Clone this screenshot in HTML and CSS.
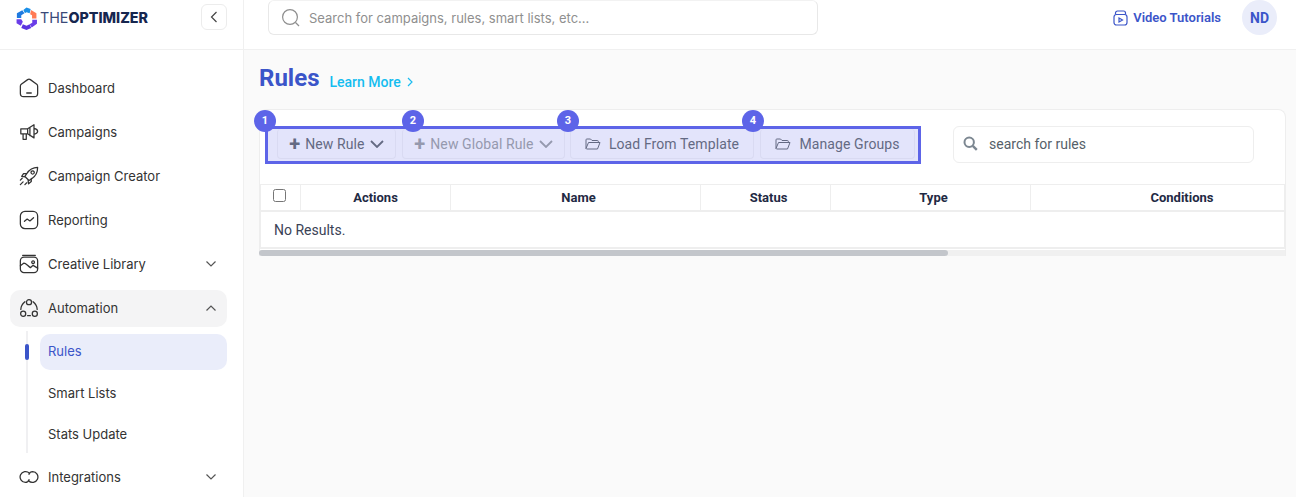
FILE: index.html
```html
<!DOCTYPE html>
<html lang="en">
<head>
<meta charset="utf-8">
<title>Rules</title>
<link rel="stylesheet" href="styles.css">
</head>
<body>
<div class="app">
  <aside class="sidebar">
    <div class="brand">
      <div class="logo">
        <svg width="21" height="23" viewBox="0 0 20 22">
          <path fill="#1f7ae0" d="M.8 6 6 3l2 3-3 2v2.500H.8z"/>
          <path fill="#1a8fe8" d="M7 2.800 10 .5l4 1.500-1 4-3-1-1.500 1z"/>
          <path fill="#ff7a55" d="M14.300 2.800 19.500 6v5h-4.200V8l-1.800-1z"/>
          <path fill="#6a3de8" d="M15.500 12.300H20V16l-5 3.500-2-3 2.500-1.500z"/>
          <path fill="#5b34e0" d="M6.500 16.500 10 18l3-1.500 1.500 3.500-4.500 2-5-2z"/>
          <path fill="#6a3de8" d="M.5 11.800H5L6.500 14l-2 4-4-2.500z"/>
        </svg>
        <span class="logo-text"><span class="logo-the">THE</span><span class="logo-opt">OPTIMIZER</span></span>
      </div>
      <button class="collapse" aria-label="Collapse">
        <svg width="8" height="12" viewBox="0 0 8 12"><path d="M6.500 1 1.500 6l5 5" fill="none" stroke="#444" stroke-width="1.200"/></svg>
      </button>
    </div>
    <nav class="nav">
      <a class="item">
        <svg class="ico" viewBox="0 0 22 22"><path d="M1.500 9c0-1 .3-1.700 1-2.200L9.500 1.800c1-.7 2-.7 3 0l7 5c.7.5 1 1.200 1 2.200v8a3.500 3.500 0 0 1-3.500 3.500H5a3.500 3.500 0 0 1-3.500-3.500z M8.500 16.500h5"/></svg>
        <span>Dashboard</span>
      </a>
      <a class="item">
        <svg class="ico" viewBox="0 0 22 22"><path d="M2 7.500h7.500L16.500 3v14.500L9.500 13H2z M4.500 13v6h3.500v-6 M16.500 7c2.500.5 4 2 4 3.200s-1.500 2.800-4 3.300 M9.500 7.500V13 M12 6v9"/></svg>
        <span>Campaigns</span>
      </a>
      <a class="item">
        <svg class="ico" viewBox="0 0 22 22"><path d="M20.500 1.500c-5 0-9 2-12 7l-2 3 4.500 4.500 3-2c5-3 6.500-7.500 6.500-12.500z M8.500 8.500H5L3 11.500l3.500.5 M13.500 13.500V17l-3 2.500-.5-3.500 M15 5.300a1.800 1.800 0 1 0 .01 0z M1.500 20.500l3-3 M1.500 15.500l2-2 M6.500 20.500l2-2"/></svg>
        <span>Campaign Creator</span>
      </a>
      <a class="item">
        <svg class="ico" viewBox="0 0 22 22"><rect x="1.500" y="1.500" width="19" height="19" rx="5"/><path d="M6 12.500 9 10l3 2 4-3.500"/></svg>
        <span>Reporting</span>
      </a>
      <a class="item">
        <svg class="ico" viewBox="0 0 22 22"><rect x="1.500" y="3.500" width="19" height="17" rx="4"/><path d="M4 1.500h14 M1.500 13l4-3c2 0 4 3 7 5l3-2.500 5 3 M15.500 7.500a1.500 1.500 0 1 0 .01 0z"/></svg>
        <span>Creative Library</span>
        <svg class="caret" viewBox="0 0 12 8"><path d="M1.500 1.500 6 6l4.500-4.500"/></svg>
      </a>
      <a class="item item-open">
        <svg class="ico" viewBox="0 0 22 22"><circle cx="11" cy="4.600" r="2.800"/><circle cx="4.600" cy="17.300" r="2.800"/><circle cx="17.400" cy="17.300" r="2.800"/><path d="M6.500 4C3.500 6.500 2 9.500 2 12.600 M15.500 4c3 2.500 4.500 5.500 4.500 8.600 M9.500 19.500h3"/></svg>
        <span>Automation</span>
        <svg class="caret" viewBox="0 0 12 8"><path d="M1.500 6.500 6 2l4.500 4.500"/></svg>
      </a>
      <div class="sub">
        <a class="sub-item sub-active">Rules</a>
        <a class="sub-item">Smart Lists</a>
        <a class="sub-item">Stats Update</a>
      </div>
      <a class="item item-last">
        <svg class="ico" viewBox="0 0 22 22"><path d="M11.500 6.800A6 6 0 1 0 7 17c2 0 3.500-1.500 4-3 M10.500 15.200A6 6 0 1 0 15 5c-2 0-3.500 1.500-4 3"/></svg>
        <span>Integrations</span>
        <svg class="caret" viewBox="0 0 12 8"><path d="M1.500 1.500 6 6l4.500-4.500"/></svg>
      </a>
    </nav>
  </aside>

  <div class="content">
    <header class="topbar">
      <label class="global-search">
        <svg width="20" height="20" viewBox="0 0 20 20"><circle cx="9" cy="9" r="7.400" fill="none" stroke="#8e8e8e" stroke-width="1.200"/><path d="m14.500 14.500 3.500 3.500" stroke="#8e8e8e" stroke-width="1.200"/></svg>
        <span>Search for campaigns, rules, smart lists, etc...</span>
      </label>
      <div class="top-right">
        <a class="tutorials">
          <svg width="15" height="16" viewBox="0 0 15 16" fill="none" stroke="#3b55c9" stroke-width="1.200"><rect x="1" y="4.500" width="13" height="10.500" rx="2.500"/><path d="M2.500 4.500V3a2 2 0 0 1 2-2h6a2 2 0 0 1 2 2v1.500"/><path d="M6 8v4l3.500-2z"/></svg>
          <span>Video Tutorials</span>
        </a>
        <div class="avatar">ND</div>
      </div>
    </header>

    <main class="main">
      <div class="heading">
        <h1>Rules</h1>
        <a class="learn">Learn More
          <svg width="6" height="10" viewBox="0 0 6 10"><path d="M1 1l4 4-4 4" fill="none" stroke="#1cbcf0" stroke-width="1.200"/></svg>
        </a>
      </div>

      <section class="card">
        <div class="toolbar">
          <div class="spot">
            <i class="badge b1">1</i><i class="badge b2">2</i><i class="badge b3">3</i><i class="badge b4">4</i>
            <button class="btn btn-rule"><b class="plus">+</b> New Rule
              <svg class="chev" viewBox="0 0 14 8"><path d="M1 1l6 6 6-6"/></svg>
            </button>
            <button class="btn btn-global btn-off"><b class="plus">+</b> New Global Rule
              <svg class="chev" viewBox="0 0 14 8"><path d="M1 1l6 6 6-6"/></svg>
            </button>
            <button class="btn btn-load">
              <svg class="folder" viewBox="0 0 16 12"><path d="M1 10.500V1.800C1 1.300 1.300 1 1.800 1h3.700l1.500 1.500h5.500c.5 0 .8.300.8.800V4.500 M1 10.500l2.500-6h11.500l-2.500 6.500H1.500z"/></svg>
              Load From Template
            </button>
            <button class="btn btn-groups">
              <svg class="folder" viewBox="0 0 16 12"><path d="M1 10.500V1.800C1 1.300 1.300 1 1.800 1h3.700l1.500 1.500h5.500c.5 0 .8.300.8.800V4.500 M1 10.500l2.500-6h11.500l-2.500 6.500H1.500z"/></svg>
              Manage Groups
            </button>
          </div>
          <label class="rule-search">
            <svg width="15" height="15" viewBox="0 0 15 15"><circle cx="6.200" cy="6.200" r="4.700" fill="none" stroke="#7c8791" stroke-width="2"/><path d="m9.800 9.800 4 4" stroke="#7c8791" stroke-width="2.400"/></svg>
            <span>search for rules</span>
          </label>
        </div>

        <div class="table-wrap">
          <div class="thead">
            <div class="th col-check"><span class="checkbox"></span></div>
            <div class="th col-actions">Actions</div>
            <div class="th col-name">Name</div>
            <div class="th col-status">Status</div>
            <div class="th col-type">Type</div>
            <div class="th col-cond">Conditions</div>
          </div>
          <div class="empty">No Results.</div>
        </div>
        <div class="scrollbar"><div class="thumb"></div></div>
      </section>
    </main>
  </div>
</div>
</body>
</html>
```
FILE: styles.css
```css
* { box-sizing: border-box; }
html, body { margin: 0; height: 100%; }
body { font-family: "Roboto", "Liberation Sans", sans-serif; background: #fafafa; overflow: hidden; }
a { text-decoration: none; }

.app { display: flex; height: 497px; overflow: hidden; }

.sidebar { width: 244px; flex: none; background: #fff; border-right: 1px solid #f0f0f0; }
.brand { height: 50px; display: flex; align-items: flex-start; justify-content: space-between; padding: 4px 16px 0 16px; border-bottom: 1px solid #f0f0f0; }
.logo { display: flex; align-items: center; gap: 3px; margin-top: 3px; }
.logo-text { font-family: "Inter", sans-serif; font-size: 14.300px; line-height: 16px; color: #16264f; margin-top: -1px; }
.logo-the { font-weight: 400; color: #3a4a78; }
.logo-opt { font-weight: 800; }
.collapse { width: 26px; height: 26px; padding: 0; border: 1px solid #ececec; border-radius: 6px; background: #fff; display: flex; align-items: center; justify-content: center; }

.nav { padding: 20px 16px 0 10px; }
.item { display: flex; align-items: center; height: 37px; margin-bottom: 7px; padding: 0 9px 2px; border-radius: 10px; font-family: "Inter", sans-serif; font-size: 13px; color: #333; }
.item > span { flex: 1; margin-left: 9px; }
.item-open { background: #f4f4f5; }
.ico { width: 20px; height: 20px; flex: none; fill: none; stroke: #333; stroke-width: 1.400; stroke-linecap: round; stroke-linejoin: round; }
.caret { width: 12px; height: 8px; flex: none; margin-right: 1px; fill: none; stroke: #555; stroke-width: 1.200; }

.sub { margin: -3px 0 0 16px; padding: 3px 0 0 12px; border-left: 2px solid #f0f0f2; }
.sub-item { display: flex; align-items: center; height: 36px; padding-left: 8px; margin-bottom: 5px; border-radius: 10px; font-family: "Inter", sans-serif; font-size: 13px; color: #333; }
.sub-active { padding-bottom: 2px; background: #eaedfa; color: #3b55c9; position: relative; }
.sub-item:last-child { margin-bottom: 0; height: 37px; padding-bottom: 2px; }
.sub-active::before { content: ""; position: absolute; left: -15px; top: 10px; width: 4px; height: 16px; border-radius: 2px; background: #3b55c9; }
.item-last { margin-top: 6px; }

.content { flex: 1; min-width: 0; display: flex; flex-direction: column; }
.topbar { height: 50px; flex: none; background: #fff; border-bottom: 1px solid #f0f0f0; display: flex; align-items: flex-start; justify-content: space-between; padding: 0 19px 0 24px; }
.global-search { width: 550px; height: 35px; border: 1px solid #e8e8e8; border-top-color: #f2f2f2; border-radius: 6px; display: flex; align-items: center; gap: 8px; padding: 0 12px; font-family: "Inter", sans-serif; font-size: 13px; color: #8f8f8f; }
.top-right { display: flex; align-items: center; gap: 21px; height: 35px; }
.tutorials { display: flex; align-items: center; gap: 5px; font-size: 13px; font-weight: 600; color: #3b55c9; }
.avatar { width: 35px; height: 35px; border-radius: 50%; background: #eaedfa; color: #3b55c9; font-size: 14px; font-weight: 700; display: flex; align-items: center; justify-content: center; }

.main { flex: 1; padding: 0 10px 0 15px; min-width: 0; }
.heading { display: flex; align-items: flex-start; gap: 10px; height: 59px; padding-top: 14px; }
h1 { margin: 0; font-size: 24px; font-weight: 700; color: #3b55c9; }
.learn { display: flex; align-items: center; gap: 6px; margin-top: 10px; font-size: 14px; font-weight: 500; color: #14bdf0; }

.card { background: #fff; border: 1px solid #eeeeee; border-bottom: 0; border-radius: 8px 8px 0 0; }
.toolbar { height: 74px; display: flex; align-items: flex-start; padding: 16px 0 0 5px; }
.spot { position: relative; display: flex; width: 656px; height: 38px; padding: 0 3px 0 9px; border: 3px solid #5d64e8; background: #e3e4fb; }
.badge { position: absolute; top: -19px; width: 22px; height: 22px; border-radius: 50%; background: #5d64e8; color: #fff; font: 700 11px/22px "Roboto", sans-serif; text-align: center; }
.b1 { left: -14px; }
.b2 { left: 134px; }
.b3 { left: 289px; }
.b4 { left: 474px; }
.btn { height: 30px; border: 1px solid #d9daf2; border-top: 0; border-radius: 4px; background: transparent; padding: 0; display: flex; align-items: center; justify-content: center; font-family: "Roboto", sans-serif; font-size: 14px; letter-spacing: .1px; color: #646a83; }
.btn-rule { width: 119px; gap: 5px; }
.btn-global { width: 163px; margin-left: 6px; gap: 5px; }
.btn-load { width: 184px; margin-left: 5px; gap: 8px; }
.btn-groups { width: 155px; margin-left: 6px; gap: 8px; }
.btn-off { color: #9599ae; }
.plus { font-size: 20px; font-weight: 700; line-height: 18px; letter-spacing: 0; }
.chev { width: 14px; height: 8px; fill: none; stroke: currentColor; stroke-width: 1.800; }
.folder { width: 16px; height: 12px; fill: none; stroke: currentColor; stroke-width: 1; }
.rule-search { width: 301px; height: 37px; margin-left: 32px; border: 1px solid #eeeeee; border-radius: 6px; display: flex; align-items: center; gap: 11px; padding: 0 9px 2px; font-size: 14px; color: #565f69; }

.table-wrap { overflow: hidden; border-right: 1px solid #eeeeee; border-left: 2px solid #eeeeee; border-bottom: 2px solid #eeeeee; margin-left: -1px; }
.thead { display: flex; width: 1074px; height: 28px; border-top: 1px solid #eeeeee; border-bottom: 2px solid #eeeeee; margin-left: -1px; }
.th { flex: none; display: flex; align-items: center; justify-content: center; border-right: 1px solid #eeeeee; font-size: 13px; font-weight: 700; color: #1f2a44; }
.col-check { width: 41px; align-items: flex-start; justify-content: flex-start; padding: 4px 0 0 13px; }
.col-actions { width: 150px; }
.col-name { width: 250px; padding-left: 6px; }
.col-status { width: 130px; padding-left: 6px; }
.col-type { width: 200px; padding-left: 6px; }
.col-cond { width: 302px; border-right: 0; }
.checkbox { width: 13px; height: 13px; border: 1px solid #767676; border-radius: 2.500px; background: #fff; }
.empty { height: 35px; padding-left: 13px; display: flex; align-items: center; font-size: 14px; color: #3a4256; }
.scrollbar { height: 6px; margin: 1px 0 0 -1px; background: #f0f0f0; border-radius: 3px 0 0 3px; }
.thumb { width: 689px; height: 6px; background: #c3c6cb; border-radius: 3px; }
```
